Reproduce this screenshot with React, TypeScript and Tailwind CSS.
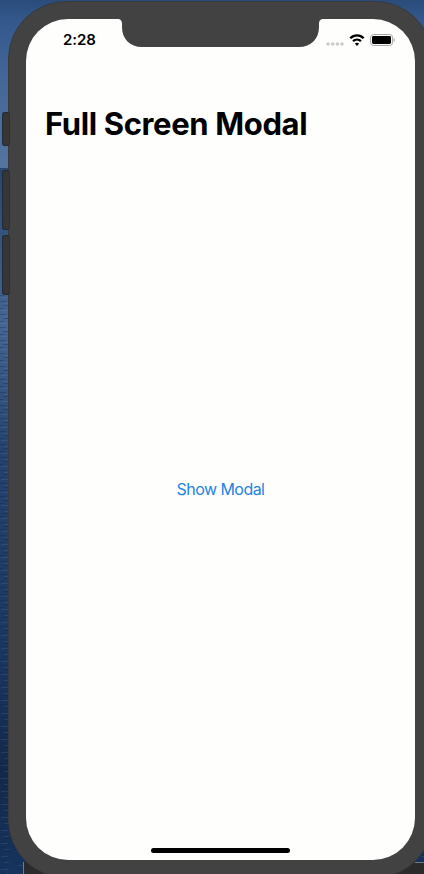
function Wallpaper() {
  return (
    <svg className="absolute inset-0" width="424" height="874" viewBox="0 0 424 874" aria-hidden="true">
      <defs>
        <linearGradient id="sky" x1="0" y1="0" x2="0" y2="1">
          <stop offset="0" stopColor="#2a4c7b" />
          <stop offset="0.12" stopColor="#34588c" />
          <stop offset="0.45" stopColor="#426697" />
          <stop offset="1" stopColor="#54749f" />
        </linearGradient>
        <linearGradient id="sea" x1="0" y1="0" x2="0" y2="1">
          <stop offset="0" stopColor="#29466f" />
          <stop offset="0.1" stopColor="#35547f" />
          <stop offset="0.22" stopColor="#456592" />
          <stop offset="0.4" stopColor="#25436f" />
          <stop offset="0.7" stopColor="#1a3560" />
          <stop offset="0.86" stopColor="#142947" />
          <stop offset="1" stopColor="#16345f" />
        </linearGradient>
        <pattern id="waves" width="30" height="13" patternUnits="userSpaceOnUse">
          <path d="M0 2.5h6M3 6.5h9M0 9.5h4M14 4.5h9M18 11.5h12" stroke="#0b2348" strokeOpacity="0.3" />
          <path d="M4 4.5h5M1 11.5h7M18 7.5h8" stroke="#8ba7c9" strokeOpacity="0.14" />
        </pattern>
      </defs>
      <rect width="424" height="168" fill="url(#sky)" />
      <rect y="168" width="424" height="706" fill="url(#sea)" />
      <rect y="295" width="424" height="579" fill="url(#waves)" />
      <rect x="23" y="862" width="401" height="12" fill="#2b2b2c" />
      <path d="M23.5 862V874M415 862.5H424" stroke="#77797c" />
    </svg>
  );
}

function Notch() {
  return (
    <svg className="absolute left-[91px] top-0" width="207" height="29" viewBox="0 0 207 29" aria-hidden="true">
      <path
        d="M0 0C4 0 5 2 5 5V8C5 20 13 28 25 28H182C194 28 202 20 202 8V5C202 2 203 0 207 0Z"
        fill="#424242"
      />
    </svg>
  );
}

function StatusIcons() {
  return (
    <svg width="72" height="14" viewBox="0 0 72 14" aria-hidden="true">
      <g fill="#cbcbcd">
        <circle cx="3" cy="11" r="1.8" />
        <circle cx="7.7" cy="11" r="1.8" />
        <circle cx="12.4" cy="11" r="1.8" />
        <circle cx="17" cy="11" r="1.8" />
      </g>
      <g fill="none" stroke="#000" strokeWidth="2.3">
        <path d="M25.3 5.2C29.1 1.3 34.9 1.3 38.7 5.2" />
        <path d="M28 8.2C30.3 6 33.7 6 36 8.2" />
      </g>
      <path d="M29.8 10.6C31.1 9.4 32.9 9.4 34.2 10.6L32 13Z" />
      <rect x="45.6" y="1.5" width="22" height="11" rx="3" fill="none" stroke="#a5a5a5" />
      <rect x="47" y="3" width="19" height="8" rx="1.4" />
      <path d="M68.6 5V9C70.2 8.4 70.2 5.6 68.6 5Z" fill="#a5a5a5" />
    </svg>
  );
}

function SideButtons() {
  return (
    <div className="absolute left-[2px] top-[112px] z-10 flex w-[8px] flex-col">
      <div className="h-[34px] rounded-[3px] border border-[#242a32] border-r-[#303030] bg-[#363636]" />
      <div className="mt-[24px] h-[60px] rounded-[3px] border border-[#242a32] border-r-[#303030] bg-[#363636]" />
      <div className="mt-[5px] h-[60px] rounded-[3px] border border-[#242a32] border-r-[#303030] bg-[#363636]" />
    </div>
  );
}

export default function App() {
  return (
    <div className="relative flex h-[874px] w-[424px] overflow-hidden bg-[#213f6b] font-['Inter','Liberation_Sans',sans-serif]">
      <Wallpaper />
      <SideButtons />
      <div className="relative ml-[8px] mt-[1px] h-[877px] w-[425px] shrink-0 rounded-[58px] border border-[#383a3d] bg-[#424242] px-[17px] pt-[17px]">
        <main className="relative flex h-[841px] w-[389px] flex-col overflow-hidden rounded-[42px] bg-[#fefefd] text-black">
          <Notch />
          <header className="flex h-[42px] shrink-0 items-center justify-between pl-[37px] pr-[18px]">
            <span className="text-[15px] font-semibold leading-5 tracking-[-0.05px]">2:28</span>
            <StatusIcons />
          </header>
          <h1 className="mt-[43px] whitespace-nowrap pl-[19px] text-[31px] font-bold leading-[40px] tracking-[-0.36px]">
            Full Screen Modal
          </h1>
          <div className="mt-[334px] flex justify-center">
            <button className="whitespace-nowrap text-[16px] leading-[22px] tracking-[-0.54px] text-[#2482e2]">
              Show Modal
            </button>
          </div>
          <div className="mx-auto mb-[7px] mt-auto h-[5px] w-[139px] rounded-full bg-black" />
        </main>
      </div>
    </div>
  );
}
